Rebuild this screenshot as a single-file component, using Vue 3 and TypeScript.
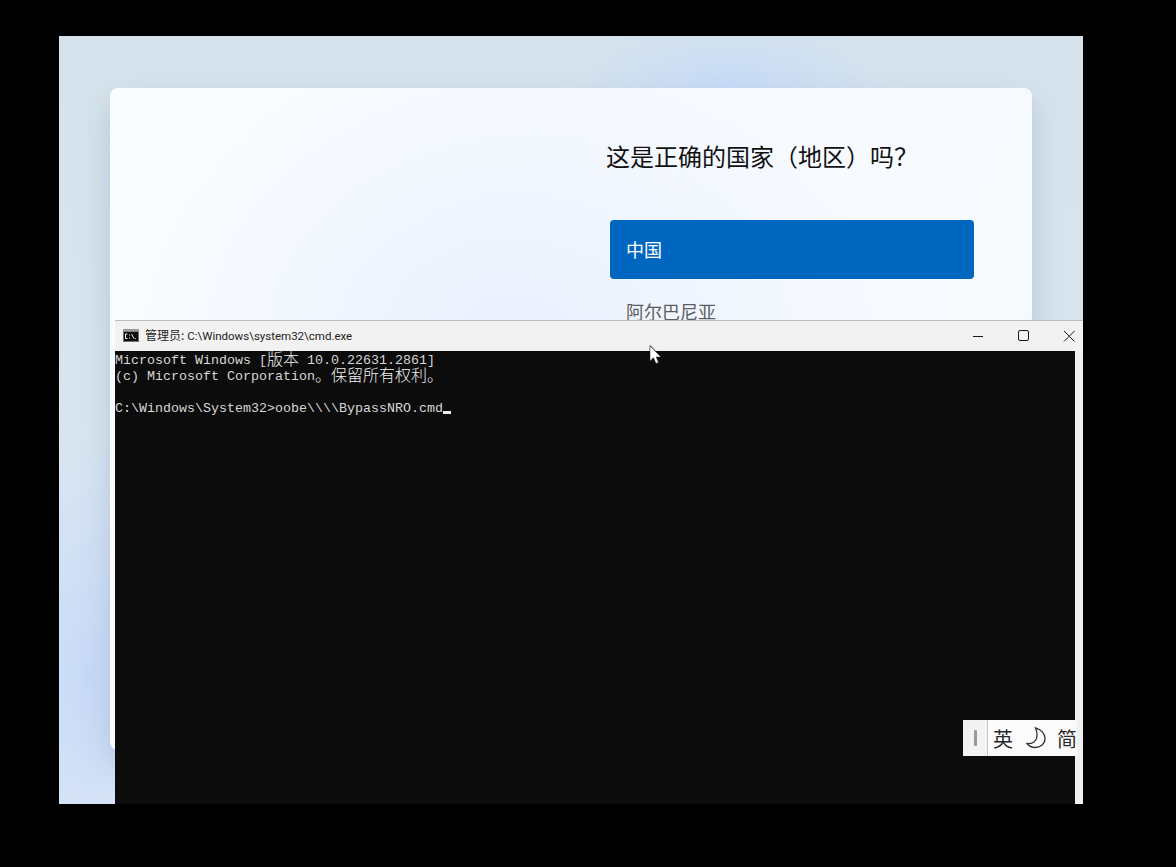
<script setup lang="ts">
const terminalLines: { text: string; cjk?: boolean }[][] = [
  [{ text: 'Microsoft Windows [' }, { text: '版本', cjk: true }, { text: ' 10.0.22631.2861]' }],
  [{ text: '(c) Microsoft Corporation' }, { text: '。保留所有权利。', cjk: true }],
  [{ text: ' ' }],
  [{ text: 'C:\\Windows\\System32>oobe\\\\\\\\BypassNRO.cmd' }],
]
</script>

<template>
  <div class="page">
    <main class="screen">
      <section class="card">
        <div class="panel">
          <h1 class="title">这是正确的国家（地区）吗？</h1>
          <ul class="list">
            <li class="item selected">中国</li>
            <li class="item">阿尔巴尼亚</li>
          </ul>
        </div>
      </section>

      <section class="console">
        <header class="titlebar">
          <svg class="app-icon" width="16" height="13" viewBox="0 0 16 13">
            <rect x="0" y="0" width="16" height="13" fill="#6e6e6e" />
            <rect x="0" y="0" width="16" height="2.500" fill="#9a9a9a" />
            <rect x="1" y="3" width="14" height="9" fill="#0c0c0c" />
            <path d="M4.500 5H2.500V9.500H4.500M6.500 5.500V6.500M6.500 8.500V9.500M8.500 5L11 9.500M12.500 9V9.800" fill="none" stroke="#f2f2f2" stroke-width="1" />
          </svg>
          <span class="window-title"><span class="title-cjk">管理员:</span> C:\Windows\system32\cmd.exe</span>
          <div class="controls">
            <svg width="46" height="30" viewBox="0 0 46 30"><path d="M19 15.500H29" stroke="#1a1a1a" /></svg>
            <svg width="46" height="30" viewBox="0 0 46 30"><rect x="18.500" y="9.500" width="10" height="10" rx="1.500" fill="none" stroke="#1a1a1a" /></svg>
            <svg width="46" height="30" viewBox="0 0 46 30"><path d="M18 10L28.500 20.500M28.500 10L18 20.500" stroke="#1a1a1a" /></svg>
          </div>
        </header>
        <div class="body">
          <div class="terminal">
            <div v-for="(line, i) in terminalLines" :key="i" class="line">
              <span v-for="(part, j) in line" :key="j" :class="{ cjk: part.cjk }">{{ part.text }}</span><span v-if="i === 3" class="caret"></span>
            </div>
          </div>
          <div class="scrollbar"></div>
        </div>
      </section>

      <div class="ime">
        <div class="grip"><span></span></div>
        <span class="ime-key">英</span>
        <svg class="moon" width="21" height="22" viewBox="0 0 21 22">
          <path d="M9.500 1C15 2.500 19 6.500 19 11.500C19 17 14.500 20.500 9 20.500C6 20.500 3 19.200 1 16.500C5 17 8.500 15.500 10.300 12C11.500 8.500 11 4.500 9.500 1Z" fill="none" stroke="#333" stroke-width="1.300" />
        </svg>
        <span class="ime-key">简</span>
      </div>

      <svg class="cursor" width="18" height="24" viewBox="0 0 18 24">
        <path d="M1 0V15L4.500 12L7 18L10 16.800L7.500 11.500H12Z" fill="#00000055" transform="translate(-0.500 -1.500)" />
        <path d="M1 1V16L4.500 12.800L7 18.500L9.500 17.400L7.200 12H12Z" fill="#fff" stroke="#222" stroke-width="0.500" />
      </svg>
    </main>
  </div>
</template>

<style scoped>
.page {
  width: 1176px;
  height: 867px;
  padding: 36px 93px 63px 59px;
  box-sizing: border-box;
  background: #000;
  overflow: hidden;
}

.screen {
  position: relative;
  width: 1024px;
  height: 768px;
  padding: 52px 51px 0;
  box-sizing: border-box;
  overflow: hidden;
  font-family: "Noto Sans CJK SC", "Liberation Sans", sans-serif;
  background:
    radial-gradient(ellipse 170px 60px at 670px 45px, #c8dcf8 0%, #c8dcf800 100%),
    radial-gradient(ellipse 130px 240px at 30px 640px, #c8daf8 0%, #c8daf800 100%),
    linear-gradient(180deg, #d6e3ec 0%, #d7e4ee 40%, #dbe7f3 75%, #e0eaf7 100%);
}

.card {
  display: flex;
  justify-content: flex-end;
  width: 922px;
  height: 662px;
  padding: 49px 58px 0 0;
  box-sizing: border-box;
  border-radius: 8px;
  box-shadow: 0 14px 30px #6c86ad50;
  background:
    radial-gradient(ellipse 380px 300px at 400px 250px, #e9f1fe 0%, #e9f1fe00 100%),
    linear-gradient(110deg, #fafcfe 0%, #f7faff 55%, #f6f9fc 100%);
}

.panel {
  width: 368px;
}

.title {
  margin: 0 0 45px;
  font-size: 24px;
  font-weight: 400;
  line-height: 38px;
  color: #111;
}

.list {
  margin: 0 0 0 4px;
  padding: 0;
  list-style: none;
}

.item {
  height: 59px;
  margin-bottom: 3px;
  padding-left: 16px;
  font-size: 18px;
  line-height: 59px;
  color: #5c5c5c;
  border-radius: 4px;
}

.selected {
  color: #fff;
  background: #0067c0;
}

.console {
  position: absolute;
  left: 56px;
  top: 284px;
  width: 968px;
  height: 484px;
  display: flex;
  flex-direction: column;
}

.titlebar {
  display: flex;
  align-items: center;
  flex: none;
  height: 31px;
  box-sizing: border-box;
  padding-left: 8px;
  border-top: 1px solid #b9bcc0;
  background: #f2f2f2;
}

.app-icon {
  flex: none;
  margin-right: 6px;
  margin-bottom: 1px;
}

.window-title {
  font-size: 11.500px;
  line-height: 14px;
  margin-bottom: 2px;
  color: #222;
  font-family: Roboto, "Noto Sans CJK SC", sans-serif;
}

.title-cjk {
  font-size: 12px;
  font-family: "Noto Sans CJK SC", sans-serif;
}

.controls {
  display: flex;
  margin-left: auto;
  margin-right: -9px;
}

.body {
  display: flex;
  flex: 1;
  min-height: 0;
}

.terminal {
  flex: 1;
  padding-top: 2px;
  background: #0c0c0c;
  color: #d6d6d6;
  font-family: "Liberation Mono", "Noto Sans CJK SC", monospace;
  font-size: 13.330px;
  line-height: 16px;
}

.line {
  display: flex;
  height: 16px;
  white-space: pre;
}

.cjk {
  font-family: "Noto Sans CJK SC", sans-serif;
  font-size: 16px;
  line-height: 10px;
  font-weight: 300;
  color: #f0f0f0;
}

.caret {
  align-self: flex-end;
  width: 8px;
  height: 3px;
  margin-bottom: 3px;
  background: #ececec;
}

.scrollbar {
  flex: none;
  width: 8px;
  background: #f0f0f0;
}

.ime {
  position: absolute;
  left: 904px;
  top: 684px;
  display: flex;
  align-items: center;
  width: 114px;
  height: 36px;
  overflow: hidden;
  background: #fbfbfb;
}

.grip {
  display: flex;
  align-items: center;
  justify-content: center;
  flex: none;
  width: 25px;
  height: 36px;
  box-sizing: border-box;
  border-right: 1px solid #c8c8c8;
  background: #f3f3f3;
}

.grip span {
  width: 3px;
  height: 16px;
  border-radius: 1px;
  background: #999;
}

.ime-key {
  flex: none;
  font-size: 20px;
  color: #2a2a2a;
  margin-left: 5px;
}

.moon {
  flex: none;
  margin-left: 13px;
  margin-right: 5px;
}

.cursor {
  position: absolute;
  left: 590px;
  top: 309px;
}
</style>

<style>
html,
body {
  margin: 0;
  background: #000;
}
</style>
